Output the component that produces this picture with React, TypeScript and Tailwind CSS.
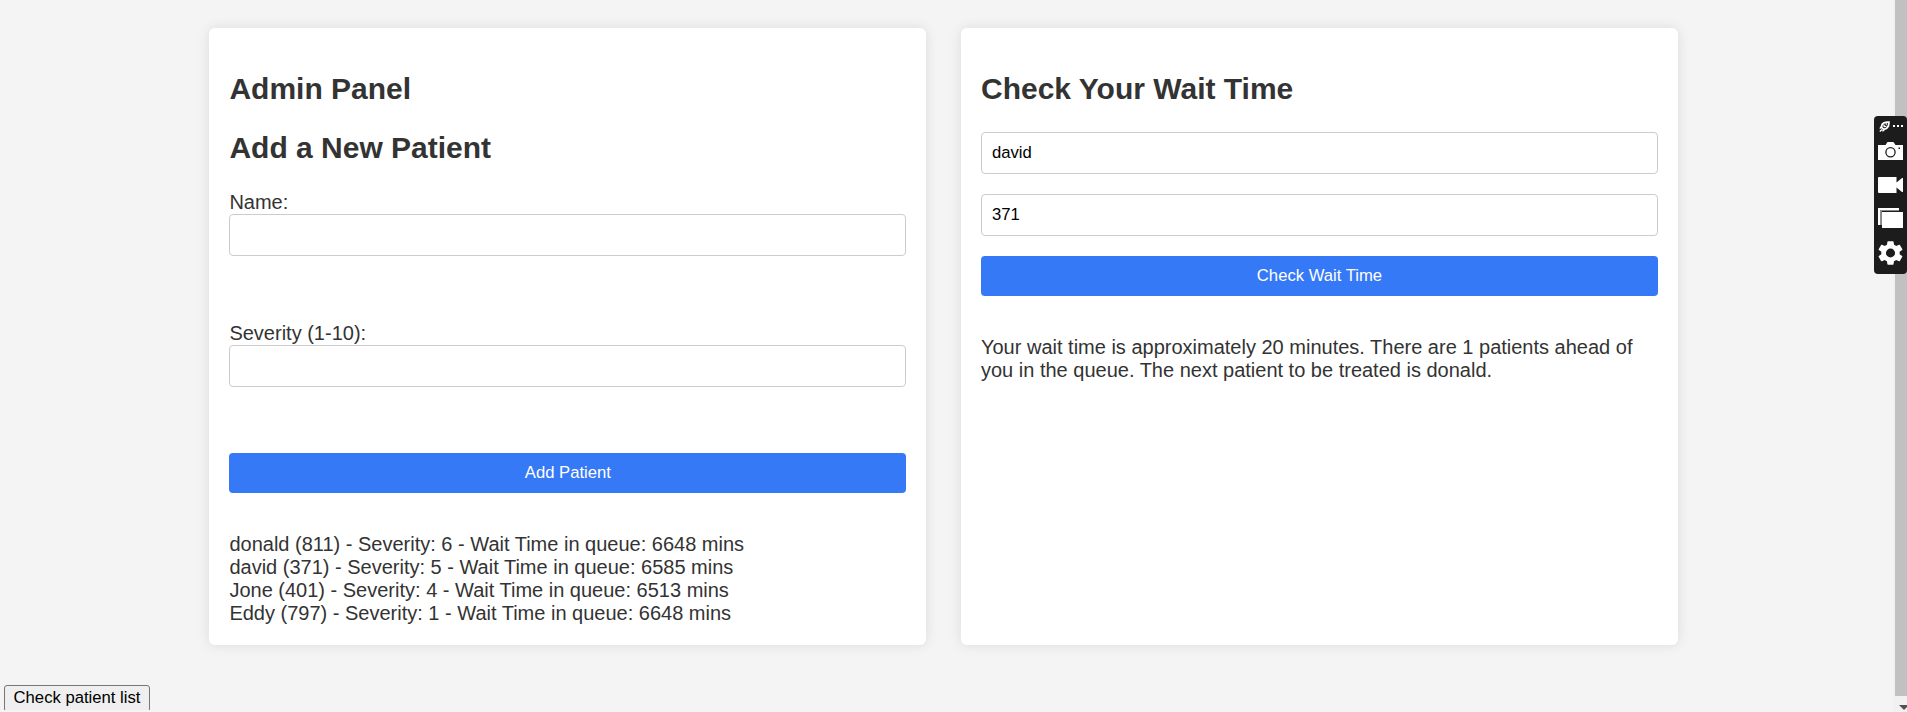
import React from "react";

const patients = [
  { name: "donald", id: 811, severity: 6, wait: 6648 },
  { name: "david", id: 371, severity: 5, wait: 6585 },
  { name: "Jone", id: 401, severity: 4, wait: 6513 },
  { name: "Eddy", id: 797, severity: 1, wait: 6648 },
];

function Card({ children }: { children: React.ReactNode }) {
  return (
    <section className="w-[717px] h-[617px] rounded-[6px] bg-white p-5 shadow-[0_0_12.5px_rgba(0,0,0,0.1)]">
      {children}
    </section>
  );
}

function Heading({ children }: { children: React.ReactNode }) {
  return <h2 className="mt-[25px] h-[34px] text-[30px] leading-[32px] font-bold">{children}</h2>;
}

function TextInput({ value = "", label }: { value?: string; label: string }) {
  return (
    <input
      aria-label={label}
      defaultValue={value}
      className="block h-[42px] w-full rounded-[4px] border border-[#cccccc] bg-white px-[10px] text-[16.667px] text-black outline-none"
    />
  );
}

function Button({ children }: { children: React.ReactNode }) {
  return (
    <button className="block h-10 w-full rounded-[4px] bg-[#3579f6] text-center text-[16.667px] leading-5 text-white">
      {children}
    </button>
  );
}

function CaptureToolbar() {
  return (
    <aside className="fixed top-[116px] right-0 flex h-[158px] w-[33px] flex-col items-start rounded-[4px] bg-[#1c1c1c] pl-1 text-white">
      <div className="flex h-[26px] items-start gap-[3px] pt-[5px] pl-px">
        <svg width="11" height="11" viewBox="0 0 11 11" fill="none" stroke="white" strokeWidth="1.8">
          <path d="M9.900 1.100C7 .9 4.200 1.500 3.100 3.500 2.200 5.500 2.700 7.600 4.500 8 7.300 8.500 10.100 6 9.900 1.100Z" />
          <path strokeWidth="1.4" d="M5.300 3.600C4.400 5.500 5.500 6.300 7.300 5M6.700 3h1.300M.8 10.400l2.200-2M3.400 10.300l1.900-1.400M.9 7.700l1.400-2" />
        </svg>
        <svg width="10" height="11" viewBox="0 0 10 11" fill="white">
          <rect x="0" y="4" width="2" height="2" />
          <rect x="4" y="4" width="2" height="2" />
          <rect x="8" y="4" width="2" height="2" />
        </svg>
      </div>
      <svg width="25" height="18" viewBox="0 0 25 18">
        <path fill="white" d="M0 3h7.500L9.500 0h6l2 3H25v15H0Z" />
        <circle cx="12.500" cy="10.300" r="4.600" fill="none" stroke="#1c1c1c" strokeWidth="1.3" />
        <rect x="20.500" y="5.500" width="1.500" height="1.500" fill="#1c1c1c" />
      </svg>
      <svg className="mt-[17px]" width="25" height="16" viewBox="0 0 25 16" fill="white">
        <path d="M1 0h17.500v5.500L24 1h1v14h-1l-5.500-4.500V16H1a1 1 0 0 1-1-1V1a1 1 0 0 1 1-1Z" />
      </svg>
      <svg className="mt-[15px]" width="25" height="20" viewBox="0 0 25 20">
        <path fill="white" d="M0 0h21v2H2.500v15H0Z" />
        <path fill="#888" d="M3 2h18v1H4v14H3Z" />
        <path fill="white" d="M4 4h21v16H4Z" />
      </svg>
      <svg className="mt-[13px]" width="25" height="24" viewBox="2.200 2.200 19.600 19.600" preserveAspectRatio="none" fill="white">
        <path d="M19.140 12.940c.04-.3.060-.61.060-.94s-.02-.64-.07-.94l2.030-1.580a.49.49 0 0 0 .12-.61l-1.920-3.320a.49.49 0 0 0-.59-.22l-2.390.96a7 7 0 0 0-1.620-.94l-.36-2.540A.48.48 0 0 0 13.920 2.400h-3.840a.48.48 0 0 0-.48.410l-.36 2.540c-.59.240-1.130.570-1.620.94l-2.390-.96a.49.49 0 0 0-.59.220L2.720 8.870a.48.48 0 0 0 .12.610l2.030 1.580c-.05.300-.09.630-.09.940s.02.640.07.940l-2.030 1.580a.49.49 0 0 0-.12.610l1.920 3.320c.12.220.370.290.590.220l2.390-.96c.500.380 1.030.700 1.620.940l.36 2.540c.05.240.240.410.480.410h3.840c.240 0 .440-.17.470-.41l.36-2.540c.59-.24 1.130-.56 1.620-.94l2.390.96c.220.080.470 0 .590-.22l1.920-3.320a.48.48 0 0 0-.12-.61ZM12 15.600A3.600 3.600 0 1 1 12 8.400a3.600 3.600 0 0 1 0 7.200Z" />
      </svg>
    </aside>
  );
}

export default function App() {
  return (
    <div className="flex h-[712px] w-full overflow-hidden bg-[#f4f4f4] font-['Liberation_Sans',Arial,sans-serif] text-[20px] leading-[23px] text-[#333333]">
      <div className="flex min-w-0 flex-1 flex-col">
        <main className="flex gap-[34.600px] pt-7 pl-[209.400px]">
          <Card>
            <Heading>Admin Panel</Heading>
            <Heading>Add a New Patient</Heading>
            <form className="mt-[25px]" onSubmit={(e) => e.preventDefault()}>
              <label className="block">Name:</label>
              <TextInput label="Name" />
              <label className="mt-[66px] block">Severity (1-10):</label>
              <TextInput label="Severity" />
              <div className="mt-[66px]">
                <Button>Add Patient</Button>
              </div>
            </form>
            <ul className="mt-10">
              {patients.map((p) => (
                <li key={p.id}>
                  {`${p.name} (${p.id}) - Severity: ${p.severity} - Wait Time in queue: ${p.wait} mins`}
                </li>
              ))}
            </ul>
          </Card>
          <Card>
            <Heading>Check Your Wait Time</Heading>
            <div className="mt-[25px] flex flex-col gap-5">
              <TextInput label="Patient name" value="david" />
              <TextInput label="Patient id" value="371" />
              <Button>Check Wait Time</Button>
            </div>
            <p className="mt-10">
              Your wait time is approximately 20 minutes. There are 1 patients ahead of you in the queue. The next
              patient to be treated is donald.
            </p>
          </Card>
        </main>
        <div className="mt-10 h-[25px] overflow-hidden pl-1">
          <button className="flex h-[27px] w-[146px] items-start justify-center rounded-[3px] border border-[#767676] bg-[#efefef] pt-px text-[16.667px] leading-[21px] whitespace-nowrap text-black">
            Check patient list
          </button>
        </div>
      </div>
      <div className="flex w-[14px] flex-col items-end bg-[#f1f1f1]">
        <div className="h-[696px] w-3 bg-[#c1c1c1]" />
        <svg className="mt-[9px]" width="8" height="5" viewBox="0 0 8 5">
          <path d="M0 0h8v2L5 5Z" fill="#505050" />
        </svg>
      </div>
      <CaptureToolbar />
    </div>
  );
}
